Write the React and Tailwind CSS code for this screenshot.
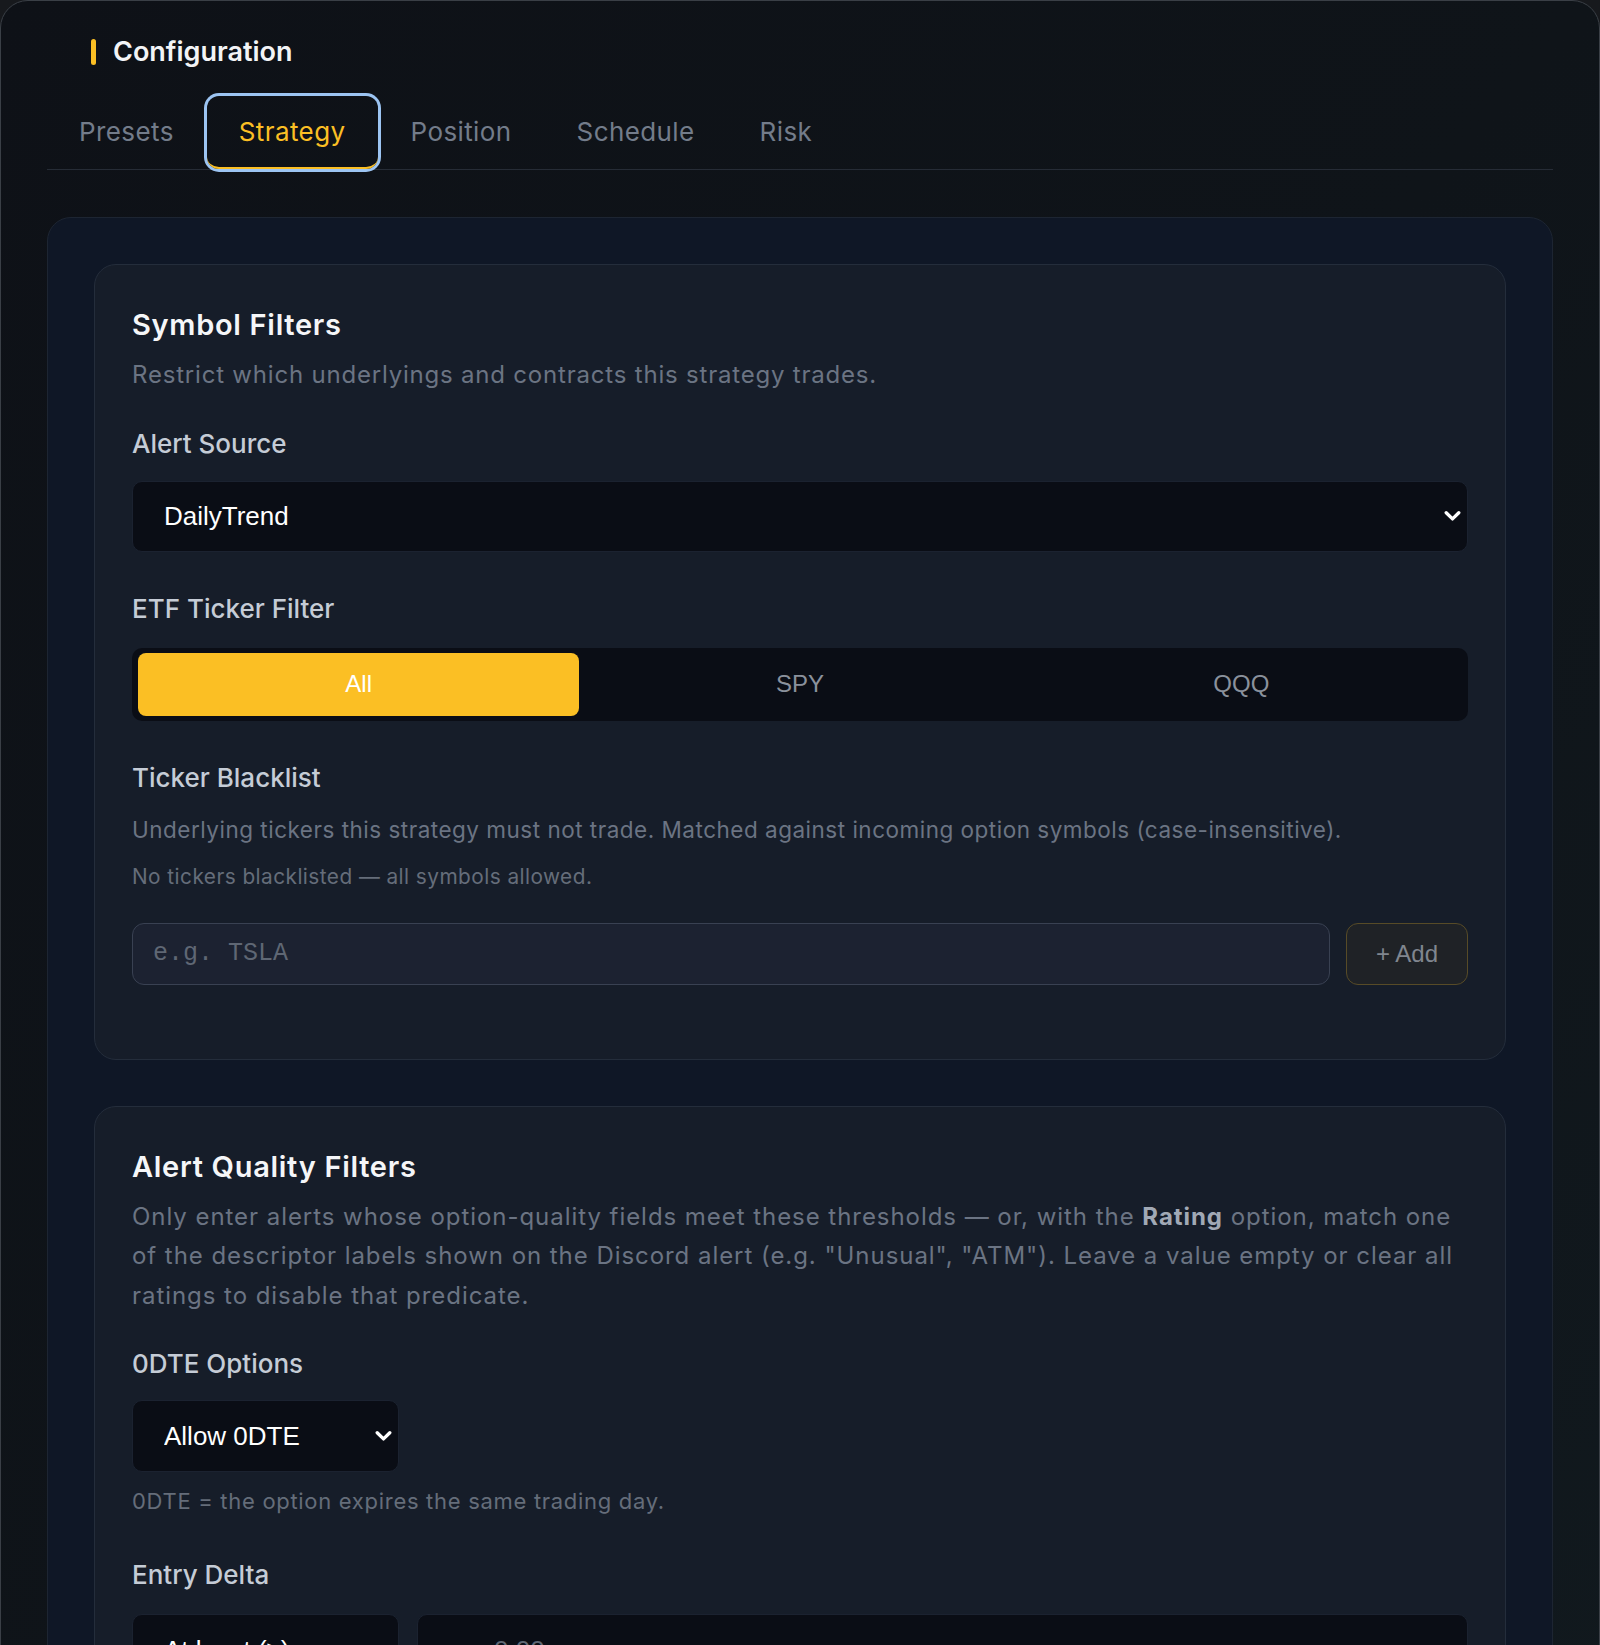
import React from 'react';

const tabs = ['Presets', 'Strategy', 'Position', 'Schedule', 'Risk'];
const etfOptions = ['All', 'SPY', 'QQQ'];

const Chevron = ({ className }) => (
  <svg
    width="17"
    height="11"
    viewBox="0 0 17 11"
    fill="none"
    className={`pointer-events-none absolute top-1/2 -translate-y-1/2 ${className}`}
  >
    <path d="M2.2 2.2 8.5 8.4 14.8 2.2" stroke="#ffffff" strokeWidth="3.3" strokeLinecap="round" strokeLinejoin="round" />
  </svg>
);

const SelectBox = ({ value, options, className = '', height = 'h-[70px]' }) => (
  <div className={`relative ${className}`}>
    <select
      defaultValue={value}
      className={`${height} w-full appearance-none rounded-[10px] border border-[#1b2230] bg-[#0a0d15] pl-[31px] font-['Liberation_Sans',Arial,sans-serif] text-[26px] text-white outline-none`}
    >
      {options.map((o) => (
        <option key={o}>{o}</option>
      ))}
    </select>
    <Chevron className="right-[7px]" />
  </div>
);

const Label = ({ children }) => (
  <div className="text-[26px] leading-[38px] font-medium text-[#c5ccd6]">{children}</div>
);

const Card = ({ title, children }) => (
  <section className="rounded-[22px] border border-[#242d3b] bg-[#161d29] px-[37px] pt-[40px]">
    <h3 className="text-[29px] leading-[40px] font-semibold tracking-[0.7px] text-[#f5f6f8]">{title}</h3>
    {children}
  </section>
);

export default function App() {
  const [etf, setEtf] = React.useState('All');

  return (
    <div className="h-[1645px] overflow-hidden bg-[#17191d] font-['Inter',sans-serif]">
      <div className="min-h-[1760px] rounded-[28px] border border-[#3a3f46] bg-linear-to-br from-[#0e1117] via-[#0f1419] to-[#11191e] px-[46px] pt-[31px]">
        {/* header */}
        <div className="flex items-center gap-[17px] pl-[44px]">
          <span className="h-[26px] w-[5px] rounded-full bg-[#fbbf24]" />
          <h2 className="text-[27px] leading-[40px] font-semibold text-[#f3f4f6]">Configuration</h2>
        </div>

        {/* tabs */}
        <div className="mt-[24px] flex gap-[1px] border-b border-[#262c36]">
          {tabs.map((t) => (
            <button
              key={t}
              className={
                t === 'Strategy'
                  ? 'rounded-[12px] border-b-2 border-[#fbbf24] px-8 pt-4 pb-4 text-[26px] leading-[39px] tracking-[0.4px] text-[#fbbf24] ring-[3px] ring-[#9cc4f2]'
                  : 'border-b-2 border-transparent px-8 pt-4 pb-4 text-[26px] leading-[39px] tracking-[0.4px] text-[#737c8a]'
              }
            >
              {t}
            </button>
          ))}
        </div>

        {/* strategy panel */}
        <div className="mt-[47px] flex flex-col gap-[46px] rounded-[24px] border border-[#1d2532] bg-[#0f1726] p-[46px]">
          <Card title="Symbol Filters">
            <p className="mt-[10px] text-[24px] leading-[39.5px] tracking-[0.8px] text-[#6b7483]">
              Restrict which underlyings and contracts this strategy trades.
            </p>

            <div className="mt-[30px]">
              <Label>Alert Source</Label>
              <SelectBox
                className="mt-[18px]"
                height="h-[71px]"
                value="DailyTrend"
                options={['DailyTrend', 'FlowScanner', 'Manual']}
              />
            </div>

            <div className="mt-[38px]">
              <Label>ETF Ticker Filter</Label>
              <div className="mt-[20px] grid grid-cols-3 rounded-[10px] bg-[#0a0d15] px-[6px] py-[5px]">
                {etfOptions.map((o) => (
                  <button
                    key={o}
                    onClick={() => setEtf(o)}
                    className={`h-[63px] rounded-[8px] font-['Liberation_Sans',Arial,sans-serif] text-[24px] ${
                      etf === o ? 'bg-[#fbbf24] text-white' : 'text-[#8a919c]'
                    }`}
                  >
                    {o}
                  </button>
                ))}
              </div>
            </div>

            <div className="mt-[38px] pb-[74px]">
              <Label>Ticker Blacklist</Label>
              <p className="mt-[16px] text-[22.5px] leading-[34px] tracking-[0.5px] text-[#6b7483]">
                Underlying tickers this strategy must not trade. Matched against incoming option symbols (case-insensitive).
              </p>
              <p className="mt-[14px] text-[20.8px] leading-[31px] tracking-[0.45px] text-[#656d7a]">
                No tickers blacklisted — all symbols allowed.
              </p>
              <div className="mt-[31px] flex gap-[16px]">
                <input
                  placeholder="e.g. TSLA"
                  className="h-[62px] flex-1 rounded-[12px] border-[1.5px] border-[#394152] bg-[#1c2231] pl-[20px] font-['Liberation_Mono',monospace] text-[25px] text-white outline-none placeholder:text-[#5f6774]"
                />
                <button className="h-[62px] w-[122px] rounded-[12px] border-[1.5px] border-[#574b27] bg-[#1f2226] font-['Liberation_Sans',Arial,sans-serif] text-[24px] text-[#80868f]">
                  + Add
                </button>
              </div>
            </div>
          </Card>

          <Card title="Alert Quality Filters">
            <p className="mt-[10px] text-[24px] leading-[39.5px] tracking-[0.95px] text-[#6b7483]">
              Only enter alerts whose option-quality fields meet these thresholds — or, with the{' '}
              <strong className="font-bold text-[#a1a9b5]">Rating</strong> option, match one of the descriptor labels
              shown on the Discord alert (e.g. "Unusual", "ATM"). Leave a value empty or clear all ratings to disable
              that predicate.
            </p>

            <div className="mt-[30px]">
              <Label>0DTE Options</Label>
              <SelectBox
                className="mt-[17px] w-[267px]"
                height="h-[72px]"
                value="Allow 0DTE"
                options={['Allow 0DTE', 'Block 0DTE', 'Only 0DTE']}
              />
              <p className="mt-[14px] text-[22px] leading-[31px] tracking-[0.7px] text-[#656d7a]">
                0DTE = the option expires the same trading day.
              </p>
            </div>

            <div className="mt-[39px] pb-[75px]">
              <Label>Entry Delta</Label>
              <div className="mt-[20px] flex gap-[18px]">
                <SelectBox
                  className="w-[267px]"
                  height="h-[72px]"
                  value="At least (≥)"
                  options={['At least (≥)', 'At most (≤)']}
                />
                <input
                  placeholder="0.00"
                  className="h-[72px] flex-1 rounded-[10px] border border-[#1b2230] bg-[#0a0d15] pl-[76px] font-['Liberation_Sans',Arial,sans-serif] text-[26px] text-white outline-none placeholder:text-[#5f6774]"
                />
              </div>
            </div>
          </Card>
        </div>
      </div>
    </div>
  );
}
